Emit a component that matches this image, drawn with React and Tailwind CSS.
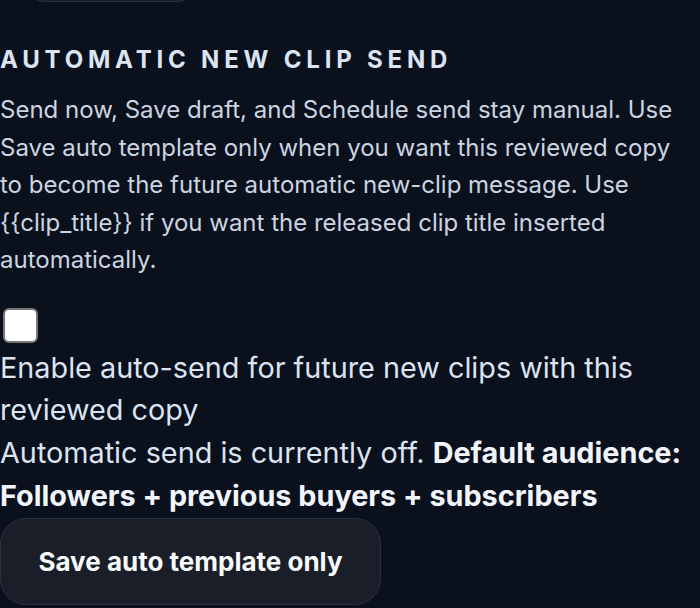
export default function App() {
  return (
    <main className="h-[608px] overflow-hidden bg-[#0a101c] font-['Inter',sans-serif] text-[#cbd5e1]">
      <div className="-mt-[40px] pl-[25px]">
        <div className="h-[42px] w-[172px] rounded-[20px] border border-[#2b3140] bg-[#191e29]" />
      </div>

      <section className="pr-[10px]">
        <h2 className="mt-[40px] text-[24px] leading-[36px] font-bold uppercase tracking-[0.2em] text-[#dbe4f3]">
          Automatic new clip send
        </h2>
        <p className="mt-[13px] text-[24px] leading-[37.5px] text-[#cbd5e1]">
          Send now, Save draft, and Schedule send stay manual. Use Save auto template only when you want this reviewed copy to become the future automatic new-clip message. Use {'{{clip_title}}'} if you want the released clip title inserted automatically.
        </p>

        <label className="mt-[29px] block text-[28.8px] leading-[42.7px] text-[#dbe4f3]">
          <input
            type="checkbox"
            className="block ml-[3px] mb-[4px] h-[35px] w-[35px] appearance-none rounded-[6px] border-2 border-[#767676] bg-white"
          />
          Enable auto-send for future new clips with this reviewed copy
        </label>
        <p className="text-[28.8px] leading-[42.7px] text-[#dbe4f3]">
          Automatic send is currently off. <strong className="font-bold text-[#f1f5fb]">Default audience: Followers + previous buyers + subscribers</strong>
        </p>

        <button className="mt-[1px] h-[87px] w-[381px] rounded-[26px] border border-[#2b3140] bg-[#191e29] text-[26px] font-bold text-[#f8fafc]">
          Save auto template only
        </button>
      </section>
    </main>
  )
}
